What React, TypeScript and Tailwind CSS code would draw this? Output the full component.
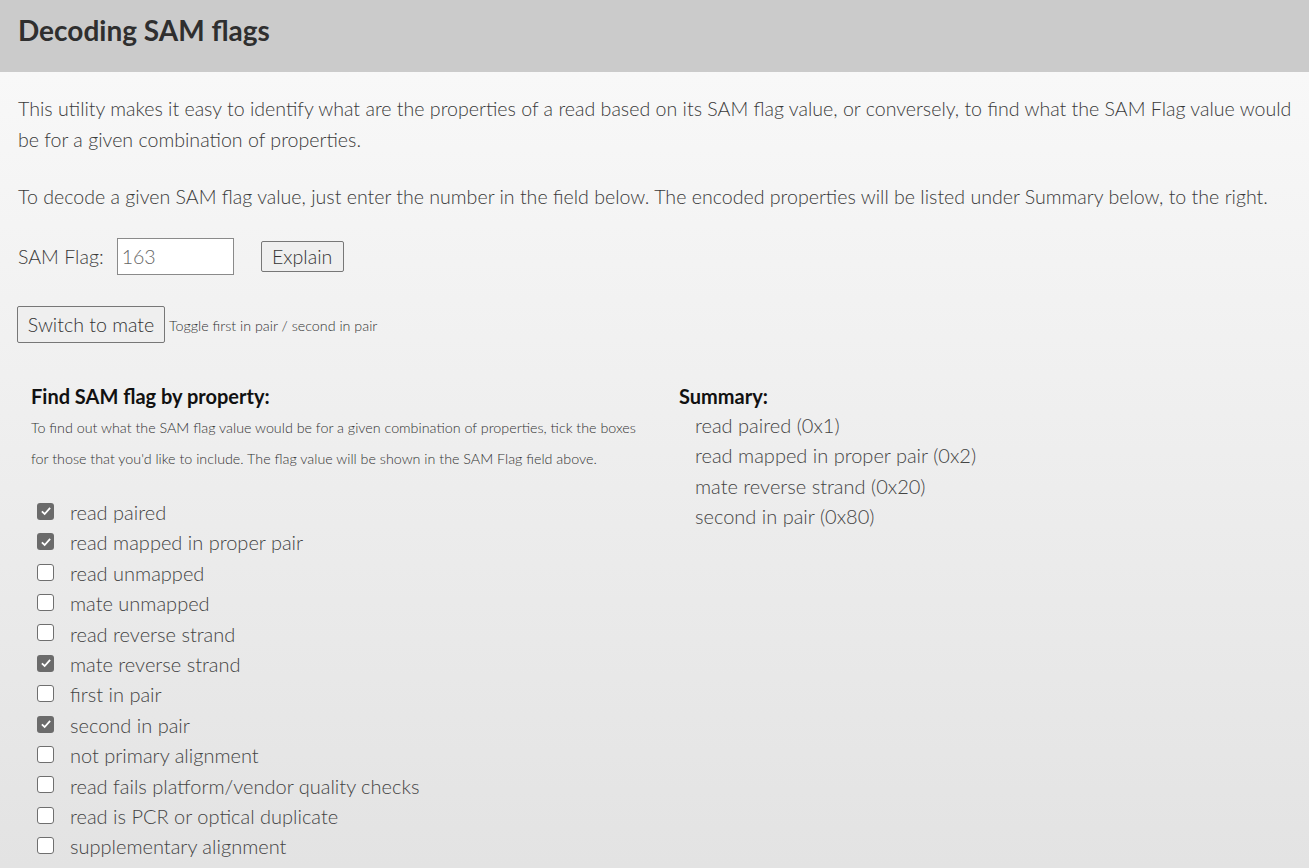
import { useState } from 'react';

const FLAGS = [
  { bit: 0x1, label: 'read paired' },
  { bit: 0x2, label: 'read mapped in proper pair' },
  { bit: 0x4, label: 'read unmapped' },
  { bit: 0x8, label: 'mate unmapped' },
  { bit: 0x10, label: 'read reverse strand' },
  { bit: 0x20, label: 'mate reverse strand' },
  { bit: 0x40, label: 'first in pair' },
  { bit: 0x80, label: 'second in pair' },
  { bit: 0x100, label: 'not primary alignment' },
  { bit: 0x200, label: 'read fails platform/vendor quality checks' },
  { bit: 0x400, label: 'read is PCR or optical duplicate' },
  { bit: 0x800, label: 'supplementary alignment' },
];

const Box = ({ checked }: { checked: boolean }) =>
  checked ? (
    <span className="flex h-[17px] w-[17px] items-center justify-center rounded-[3px] bg-[#6b6b6b]">
      <svg viewBox="0 0 16 16" className="h-[12px] w-[12px]">
        <path d="M2.5 8.5 L6.2 12 L13.5 3.8" fill="none" stroke="#fff" strokeWidth="2.4" />
      </svg>
    </span>
  ) : (
    <span className="block h-[17px] w-[17px] rounded-[3px] border border-[#6f6f6f] bg-white" />
  );

const light = "font-['Lato_Light','Lato','Liberation_Sans',sans-serif] font-light";

export default function App() {
  const [flag, setFlag] = useState(163);

  const toggle = (bit: number) => setFlag((f) => f ^ bit);

  return (
    <div className="min-h-[868px] bg-gradient-to-b from-[#fafafa] to-[#e3e3e3] font-['Lato','Liberation_Sans',sans-serif] text-[#3a3a3a]">
      <header className="h-[72px] bg-[#cbcbcb] px-[18px] pt-[11px]">
        <h1 className="text-[28px] font-bold leading-[38px] text-[#2f2f2f]">Decoding SAM flags</h1>
      </header>

      <main className={`pl-[18px] pr-[8px] pt-[21px] text-[19.6px] leading-[31px] ${light}`}>
        <p>
          This utility makes it easy to identify what are the properties of a read based on its SAM flag value, or
          conversely, to find what the SAM Flag value would be for a given combination of properties.
        </p>
        <p className="mt-[26px]">
          To decode a given SAM flag value, just enter the number in the field below. The encoded properties will be
          listed under Summary below, to the right.
        </p>

        <div className="mt-[26px] flex items-center">
          <span>SAM Flag:</span>
          <input
            value={flag}
            onChange={(e) => setFlag(Number(e.target.value) || 0)}
            className={`ml-[13px] h-[37px] w-[117px] border border-[#8a8a8a] bg-white px-[4px] text-[19.6px] text-[#666] outline-none ${light}`}
          />
          <button
            className={`ml-[27px] h-[31px] w-[83px] rounded-[2px] border border-[#777] bg-[#efefef] text-[19.6px] leading-none text-[#333] ${light}`}
          >
            Explain
          </button>
        </div>

        <div className="mt-[31px] flex items-center">
          <button
            onClick={() => setFlag((f) => (f & 0x40 || f & 0x80 ? f ^ 0xc0 : f))}
            className={`-ml-px h-[37px] w-[148px] rounded-[2px] border border-[#777] bg-[#efefef] text-[19.6px] leading-none text-[#333] ${light}`}
          >
            Switch to mate
          </button>
          <span className="ml-[4px] pt-[2px] text-[14.3px] text-[#333]">Toggle first in pair / second in pair</span>
        </div>

        <div className="mt-[39px] grid grid-cols-[648px_1fr] pl-[13px]">
          <section>
            <h2 className="font-['Lato',sans-serif] text-[20px] font-bold leading-[28px] text-[#111]">
              Find SAM flag by property:
            </h2>
            <p className="mt-[2px] text-[14.3px] leading-[31px] text-[#333]">
              To find out what the SAM flag value would be for a given combination of properties, tick the boxes
              <br />
              for those that you'd like to include. The flag value will be shown in the SAM Flag field above.
            </p>
            <ul className="mt-[23px] text-[20px] leading-[30.4px]">
              {FLAGS.map((f) => (
                <li key={f.bit} className="flex cursor-pointer items-center" onClick={() => toggle(f.bit)}>
                  <span className="ml-[6px] mr-[16px] -mt-[2px]">
                    <Box checked={(flag & f.bit) !== 0} />
                  </span>
                  <span className="text-[#444]">{f.label}</span>
                </li>
              ))}
            </ul>
          </section>

          <section>
            <h2 className="font-['Lato',sans-serif] text-[20px] font-bold leading-[28px] text-[#111]">Summary:</h2>
            <ul className="pl-[16px] text-[20px] leading-[30.4px] text-[#444]">
              {FLAGS.filter((f) => flag & f.bit).map((f) => (
                <li key={f.bit}>
                  {f.label} (0x{f.bit.toString(16).toUpperCase()})
                </li>
              ))}
            </ul>
          </section>
        </div>
      </main>
    </div>
  );
}
